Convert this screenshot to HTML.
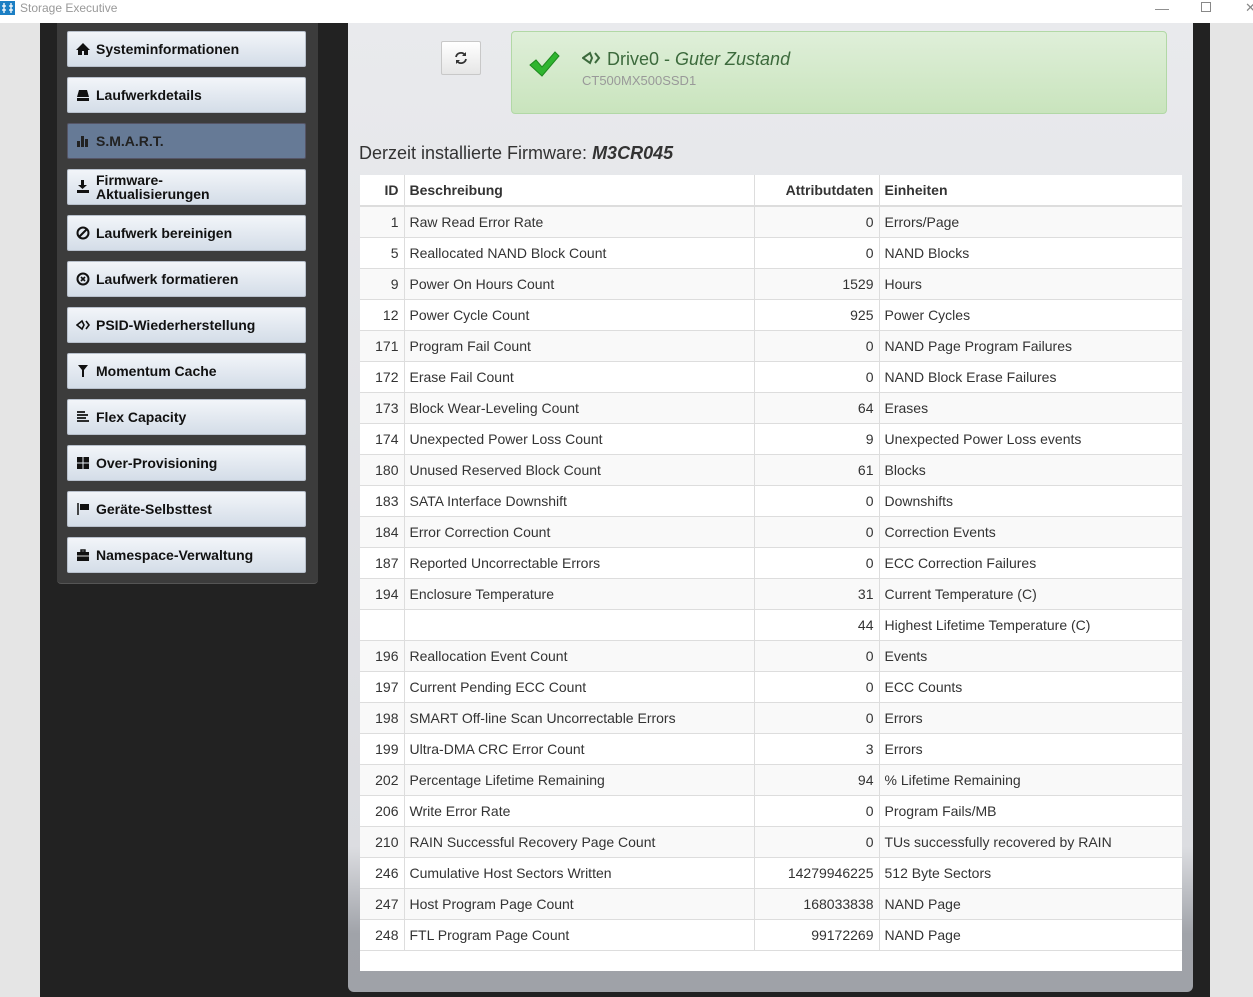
<!DOCTYPE html>
<html><head><meta charset="utf-8"><style>
*{margin:0;padding:0;box-sizing:border-box}
body{width:1253px;height:997px;overflow:hidden;background:#e5e5e5;font-family:"Liberation Sans",sans-serif;position:relative}
#title{position:absolute;left:0;top:0;width:1253px;height:23px;background:#fff;font-size:12px;color:#999}
#title .t{position:absolute;left:20px;top:1px}
#dark{position:absolute;left:40px;top:23px;width:1170px;height:974px;background:#222}
#side{position:absolute;left:57px;top:23px;width:261px;height:561px;background:#3c3c3c;border-radius:0 0 4px 4px;border-bottom:1px solid #555}
.btn{position:absolute;left:10px;width:239px;height:36px;border:1px solid #b8c0cc;border-radius:2px;background:linear-gradient(#f2f5f9,#d4dde8);font-weight:bold;font-size:14px;color:#111;display:flex;align-items:center;padding-left:8px;line-height:14px}
.btn svg{width:14px;height:14px;margin-right:6px;flex:none}
.btn.act{background:#667a96;border-color:#556;color:#222}
#main{position:absolute;left:348px;top:23px;width:845px;height:969px;background:linear-gradient(#e9eaed,#dcdde1 85%,#a0a3a9 94%,#9fa2a8);border-radius:0 0 6px 6px}
#refresh{position:absolute;left:93px;top:18px;width:40px;height:34px;border:1px solid #c8c8c8;border-radius:2px;background:linear-gradient(#fff,#e6e6e6)}
#status{position:absolute;left:163px;top:8px;width:656px;height:83px;border:1px solid #b2d8a6;border-radius:4px;background:linear-gradient(#dfefd9,#c9e4bd)}
#status .n{position:absolute;left:70px;top:17px;font-size:18px;color:#3c6a3c}
#status .m{position:absolute;left:70px;top:41px;font-size:13px;color:#999}
#fw{position:absolute;left:11px;top:120px;font-size:18px;color:#333}
#tbl{position:absolute;left:12px;top:152px;width:822px;height:796px;background:#fff;z-index:2}
table{border-collapse:collapse;width:822px;font-size:14px;color:#333;background:#fff}
td,th{height:31px;padding:0 5px;border-top:1px solid #ddd;border-left:1px solid #ddd;background:#fff}
td:first-child,th:first-child{border-left:none}
th{text-align:left;border-top:none;border-bottom:2px solid #ddd;height:31px}
.r{text-align:right}
tbody tr:nth-child(odd) td{background:#f9f9f9}
tbody tr:last-child td{border-bottom:1px solid #ddd}
</style></head><body>
<div id="title"><svg style="position:absolute;left:0;top:1px" width="15" height="14"><rect x="0" y="0" width="15" height="14" fill="#1c7fc4"/><path d="M4 2v10M11 2v10M2 5h4M9 5h4M2 9h4M9 9h4" stroke="#fff" stroke-width="1.3"/></svg><span class="t">Storage Executive</span>
<span style="position:absolute;left:1155px;top:0;font-size:14px;color:#888">—</span>
<span style="position:absolute;left:1201px;top:2px;width:10px;height:10px;border:1px solid #888"></span>
<span style="position:absolute;left:1245px;top:0;font-size:13px;color:#888">✕</span></div>
<div id="dark"></div>
<div id="side">
<div class="btn" style="top:8px"><svg viewBox="0 0 14 14"><path d="M7 1L0 8h2v5h4V9h2v4h4V8h2z" fill="#111"/></svg>Systeminformationen</div>
<div class="btn" style="top:54px"><svg viewBox="0 0 14 14"><path d="M3 2h8l2 7H1z" fill="#111"/><rect x="1" y="10" width="12" height="3" fill="#111"/></svg>Laufwerkdetails</div>
<div class="btn act" style="top:100px"><svg viewBox="0 0 14 14"><rect x="1" y="7" width="3" height="6" fill="#222"/><rect x="5" y="2" width="3" height="11" fill="#222"/><rect x="9" y="5" width="3" height="8" fill="#222"/></svg>S.M.A.R.T.</div>
<div class="btn" style="top:146px"><svg viewBox="0 0 14 14"><path d="M5 0h3v5h3L6.5 9 2 5h3z" fill="#111"/><rect x="1" y="10" width="12" height="3" fill="#111"/></svg>Firmware-<br>Aktualisierungen</div>
<div class="btn" style="top:192px"><svg viewBox="0 0 14 14"><circle cx="7" cy="7" r="5.5" fill="none" stroke="#111" stroke-width="2"/><path d="M3 11L11 3" stroke="#111" stroke-width="2"/></svg>Laufwerk bereinigen</div>
<div class="btn" style="top:238px"><svg viewBox="0 0 14 14"><circle cx="7" cy="7" r="5.5" fill="none" stroke="#111" stroke-width="2"/><path d="M5 5l4 4M9 5l-4 4" stroke="#111" stroke-width="1.6"/></svg>Laufwerk formatieren</div>
<div class="btn" style="top:284px"><svg viewBox="0 0 14 14"><path d="M1 7l5-4 2 4-2 4z" fill="none" stroke="#111" stroke-width="1.6"/><path d="M10 3l3 4-3 4" fill="none" stroke="#111" stroke-width="1.6"/></svg>PSID-Wiederherstellung</div>
<div class="btn" style="top:330px"><svg viewBox="0 0 14 14"><path d="M2 1h10l-4 5v7H6V6z" fill="#111"/></svg>Momentum Cache</div>
<div class="btn" style="top:376px"><svg viewBox="0 0 14 14"><path d="M1 2h8M1 5h11M1 8h9M1 11h12" stroke="#111" stroke-width="1.8"/></svg>Flex Capacity</div>
<div class="btn" style="top:422px"><svg viewBox="0 0 14 14"><rect x="1" y="1" width="5.5" height="5.5" fill="#111"/><rect x="7.5" y="1" width="5.5" height="5.5" fill="#111"/><rect x="1" y="7.5" width="5.5" height="5.5" fill="#111"/><rect x="7.5" y="7.5" width="5.5" height="5.5" fill="#111"/></svg>Over-Provisioning</div>
<div class="btn" style="top:468px"><svg viewBox="0 0 14 14"><path d="M2 1v12" stroke="#111" stroke-width="1.5"/><path d="M4 2h9v6H4z" fill="#111"/></svg>Geräte-Selbsttest</div>
<div class="btn" style="top:514px"><svg viewBox="0 0 14 14"><path d="M5 2h4v2H5z" fill="none" stroke="#111" stroke-width="1.4"/><rect x="1" y="4" width="12" height="9" fill="#111"/><path d="M1 8h12" stroke="#ddd" stroke-width="1"/></svg>Namespace-Verwaltung</div>
</div>
<div id="main">
<div id="refresh"><svg style="position:absolute;left:12px;top:9px" width="14" height="14" viewBox="0 0 14 14"><path d="M2 6a5 5 0 0 1 9-2M12 8a5 5 0 0 1-9 2" fill="none" stroke="#333" stroke-width="1.8"/><path d="M12 1v4H8zM2 13V9h4z" fill="#333"/></svg></div>
<div id="status"><svg style="position:absolute;left:16px;top:18px" width="32" height="28" viewBox="0 0 32 28"><path d="M2 15l6-5 6 7L27 2l4 4-17 20z" fill="#2fb52f" stroke="#1e8a1e" stroke-width="1"/></svg>
<div class="n"><svg width="20" height="16" viewBox="0 0 20 16" style="vertical-align:-1px"><path d="M1 8l7-5 2 5-2 5z" fill="none" stroke="#3c6a3c" stroke-width="2"/><path d="M13 3l4 5-4 5" fill="none" stroke="#3c6a3c" stroke-width="2"/></svg> Drive0 - <i>Guter Zustand</i></div>
<div class="m">CT500MX500SSD1</div></div>
<div id="fw">Derzeit installierte Firmware: <b><i>M3CR045</i></b></div>
<div id="tbl"><table>
<colgroup><col style="width:44px"><col style="width:350px"><col style="width:125px"><col></colgroup>
<thead><tr><th class="r">ID</th><th>Beschreibung</th><th class="r">Attributdaten</th><th>Einheiten</th></tr></thead>
<tbody>
<tr><td class="r">1</td><td>Raw Read Error Rate</td><td class="r">0</td><td>Errors/Page</td></tr>
<tr><td class="r">5</td><td>Reallocated NAND Block Count</td><td class="r">0</td><td>NAND Blocks</td></tr>
<tr><td class="r">9</td><td>Power On Hours Count</td><td class="r">1529</td><td>Hours</td></tr>
<tr><td class="r">12</td><td>Power Cycle Count</td><td class="r">925</td><td>Power Cycles</td></tr>
<tr><td class="r">171</td><td>Program Fail Count</td><td class="r">0</td><td>NAND Page Program Failures</td></tr>
<tr><td class="r">172</td><td>Erase Fail Count</td><td class="r">0</td><td>NAND Block Erase Failures</td></tr>
<tr><td class="r">173</td><td>Block Wear-Leveling Count</td><td class="r">64</td><td>Erases</td></tr>
<tr><td class="r">174</td><td>Unexpected Power Loss Count</td><td class="r">9</td><td>Unexpected Power Loss events</td></tr>
<tr><td class="r">180</td><td>Unused Reserved Block Count</td><td class="r">61</td><td>Blocks</td></tr>
<tr><td class="r">183</td><td>SATA Interface Downshift</td><td class="r">0</td><td>Downshifts</td></tr>
<tr><td class="r">184</td><td>Error Correction Count</td><td class="r">0</td><td>Correction Events</td></tr>
<tr><td class="r">187</td><td>Reported Uncorrectable Errors</td><td class="r">0</td><td>ECC Correction Failures</td></tr>
<tr><td class="r">194</td><td>Enclosure Temperature</td><td class="r">31</td><td>Current Temperature (C)</td></tr>
<tr><td class="r"></td><td></td><td class="r">44</td><td>Highest Lifetime Temperature (C)</td></tr>
<tr><td class="r">196</td><td>Reallocation Event Count</td><td class="r">0</td><td>Events</td></tr>
<tr><td class="r">197</td><td>Current Pending ECC Count</td><td class="r">0</td><td>ECC Counts</td></tr>
<tr><td class="r">198</td><td>SMART Off-line Scan Uncorrectable Errors</td><td class="r">0</td><td>Errors</td></tr>
<tr><td class="r">199</td><td>Ultra-DMA CRC Error Count</td><td class="r">3</td><td>Errors</td></tr>
<tr><td class="r">202</td><td>Percentage Lifetime Remaining</td><td class="r">94</td><td>% Lifetime Remaining</td></tr>
<tr><td class="r">206</td><td>Write Error Rate</td><td class="r">0</td><td>Program Fails/MB</td></tr>
<tr><td class="r">210</td><td>RAIN Successful Recovery Page Count</td><td class="r">0</td><td>TUs successfully recovered by RAIN</td></tr>
<tr><td class="r">246</td><td>Cumulative Host Sectors Written</td><td class="r">14279946225</td><td>512 Byte Sectors</td></tr>
<tr><td class="r">247</td><td>Host Program Page Count</td><td class="r">168033838</td><td>NAND Page</td></tr>
<tr><td class="r">248</td><td>FTL Program Page Count</td><td class="r">99172269</td><td>NAND Page</td></tr>
</tbody></table></div>
</div>
</body></html>
